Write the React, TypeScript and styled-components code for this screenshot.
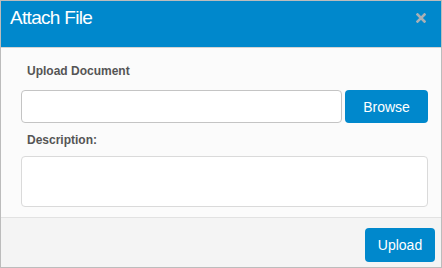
import styled, { createGlobalStyle } from 'styled-components';

const GlobalStyle = createGlobalStyle`
    html, body {
        margin: 0;
        padding: 0;
        background: #ffffff;
    }
    * {
        box-sizing: border-box;
    }
`;

const Dialog = styled.div`
    width: 442px;
    height: 268px;
    border: 1px solid #bcbcbc;
    display: flex;
    flex-direction: column;
    font-family: "Liberation Sans", Arial, sans-serif;
    background: #fbfbfb;
`;

const Header = styled.div`
    height: 47px;
    flex: none;
    background: #0088cc;
    border-bottom: 1px solid #d4d4d4;
    display: flex;
    align-items: flex-start;
    justify-content: space-between;
    padding: 6px 0 0 9px;
`;

const Title = styled.h4`
    margin: 0;
    color: #ffffff;
    font-size: 19px;
    line-height: 22px;
    font-weight: normal;
    letter-spacing: -0.7px;
`;

const Close = styled.button`
    border: 0;
    background: none;
    padding: 0;
    margin: 6px 15px 0 0;
    width: 10px;
    height: 10px;
    display: flex;
    cursor: pointer;
`;

const Body = styled.div`
    flex: 1;
    padding: 16px 13px 0 20px;
`;

const Label = styled.label<{ $gap: number }>`
    display: block;
    padding-left: 6px;
    font-size: 12px;
    line-height: 15px;
    font-weight: bold;
    color: #555555;
    margin-bottom: ${(p) => p.$gap}px;
`;

const InputRow = styled.div`
    display: flex;
    gap: 3px;
    margin-bottom: 10px;
`;

const TextInput = styled.input`
    flex: 1;
    height: 33px;
    border: 1px solid #c4c4c4;
    border-radius: 4px;
    background: #ffffff;
    padding: 0 8px;
    font-family: inherit;
    font-size: 13px;
    outline: none;
`;

const TextArea = styled.textarea`
    display: block;
    width: 100%;
    height: 51px;
    border: 1px solid #dadada;
    border-radius: 4px;
    background: #ffffff;
    resize: none;
    font-family: inherit;
    outline: none;
`;

const Button = styled.button<{ $width: number; $height: number }>`
    width: ${(p) => p.$width}px;
    height: ${(p) => p.$height}px;
    flex: none;
    border: 0;
    border-radius: 4px;
    background: #0088cc;
    color: #ffffff;
    font-family: inherit;
    font-size: 14px;
    padding: 0;
    cursor: pointer;
`;

const Footer = styled.div`
    height: 50px;
    flex: none;
    background: #f4f4f4;
    border-top: 1px solid #e2e2e2;
    display: flex;
    justify-content: flex-end;
    align-items: flex-start;
    padding: 10px 6px 0 0;
`;

export default function App() {
    return (
        <>
            <GlobalStyle />
            <Dialog>
                <Header>
                    <Title>Attach File</Title>
                    <Close aria-label="Close">
                        <svg width="10" height="10" viewBox="0 0 10 10">
                            <path d="M1.5 1.5 L8.5 8.5 M8.5 1.5 L1.5 8.5" stroke="#a9b0b5" strokeWidth="2.6" strokeLinecap="square" />
                        </svg>
                    </Close>
                </Header>
                <Body>
                    <Label $gap={11}>Upload Document</Label>
                    <InputRow>
                        <TextInput type="text" />
                        <Button $width={83} $height={33}>Browse</Button>
                    </InputRow>
                    <Label $gap={8}>Description:</Label>
                    <TextArea />
                </Body>
                <Footer>
                    <Button $width={70} $height={34}>Upload</Button>
                </Footer>
            </Dialog>
        </>
    );
}
